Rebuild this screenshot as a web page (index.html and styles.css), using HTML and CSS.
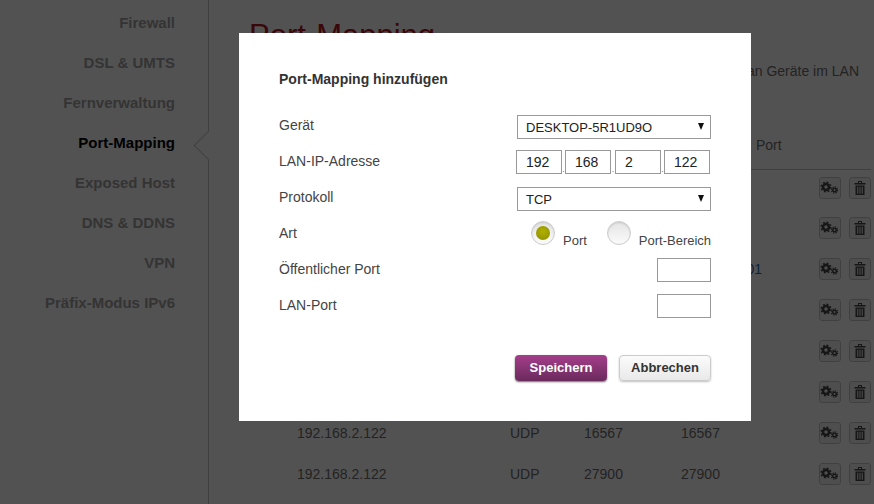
FILE: index.html
```html
<!DOCTYPE html>
<html lang="de">
<head>
<meta charset="utf-8">
<title>Port-Mapping</title>
<link rel="stylesheet" href="styles.css">
</head>
<body>
<svg class="defs" width="0" height="0" aria-hidden="true">
  <symbol id="gears" viewBox="0 0 20 20">
    <circle cx="6" cy="9" r="3" fill="none" stroke="currentColor" stroke-width="2.500"/>
    <circle cx="6" cy="9" r="4.800" fill="none" stroke="currentColor" stroke-width="1.500" stroke-dasharray="1.900 1.870"/>
    <circle cx="14.500" cy="12" r="1.800" fill="none" stroke="currentColor" stroke-width="1.400"/>
    <circle cx="14.500" cy="12" r="3.100" fill="none" stroke="currentColor" stroke-width="1.100" stroke-dasharray="1.300 1.135"/>
  </symbol>
  <symbol id="trash" viewBox="0 0 20 20">
    <path d="M4.500 5h11v1.500h-11zM8 5V3h4v2h-1V4H9v1z" fill="currentColor"/>
    <path d="M5.500 7.500h9V17h-9zM7.200 8.800v7h1.100v-7zM9.450 8.800v7h1.100v-7zM11.700 8.800v7h1.100v-7z" fill="currentColor" fill-rule="evenodd"/>
  </symbol>
</svg>

<div class="page">
  <nav class="sidebar">
    <a class="nav-item">Firewall</a>
    <a class="nav-item">DSL &amp; UMTS</a>
    <a class="nav-item">Fernverwaltung</a>
    <a class="nav-item active">Port-Mapping</a>
    <a class="nav-item">Exposed Host</a>
    <a class="nav-item">DNS &amp; DDNS</a>
    <a class="nav-item">VPN</a>
    <a class="nav-item">Präfix-Modus IPv6</a>
  </nav>
  <main class="content">
    <h1 class="page-title">Port-Mapping</h1>
    <p class="intro">an Geräte im LAN</p>
    <table class="rules">
      <thead>
        <tr><th class="c-ip"></th><th class="c-proto"></th><th class="c-pub"></th><th class="c-lan">Port</th><th class="c-act"></th></tr>
      </thead>
      <tbody>
        <tr><td></td><td></td><td></td><td></td><td class="c-act"><button class="icon-btn"><svg><use href="#gears"/></svg></button><button class="icon-btn"><svg><use href="#trash"/></svg></button></td></tr>
        <tr><td></td><td></td><td></td><td></td><td class="c-act"><button class="icon-btn"><svg><use href="#gears"/></svg></button><button class="icon-btn"><svg><use href="#trash"/></svg></button></td></tr>
        <tr><td></td><td></td><td></td><td class="link-cell">01</td><td class="c-act"><button class="icon-btn"><svg><use href="#gears"/></svg></button><button class="icon-btn"><svg><use href="#trash"/></svg></button></td></tr>
        <tr><td></td><td></td><td></td><td></td><td class="c-act"><button class="icon-btn"><svg><use href="#gears"/></svg></button><button class="icon-btn"><svg><use href="#trash"/></svg></button></td></tr>
        <tr><td></td><td></td><td></td><td></td><td class="c-act"><button class="icon-btn"><svg><use href="#gears"/></svg></button><button class="icon-btn"><svg><use href="#trash"/></svg></button></td></tr>
        <tr><td></td><td></td><td></td><td></td><td class="c-act"><button class="icon-btn"><svg><use href="#gears"/></svg></button><button class="icon-btn"><svg><use href="#trash"/></svg></button></td></tr>
        <tr><td class="c-ip">192.168.2.122</td><td>UDP</td><td>16567</td><td>16567</td><td class="c-act"><button class="icon-btn"><svg><use href="#gears"/></svg></button><button class="icon-btn"><svg><use href="#trash"/></svg></button></td></tr>
        <tr><td class="c-ip">192.168.2.122</td><td>UDP</td><td>27900</td><td>27900</td><td class="c-act"><button class="icon-btn"><svg><use href="#gears"/></svg></button><button class="icon-btn"><svg><use href="#trash"/></svg></button></td></tr>
      </tbody>
    </table>
  </main>
</div>

<div class="overlay"></div>

<section class="modal">
  <h2 class="modal-title">Port-Mapping hinzufügen</h2>
  <form class="form">
    <div class="row">
      <label class="label">Gerät</label>
      <div class="select">DESKTOP-5R1UD9O</div>
    </div>
    <div class="row row-ip">
      <label class="label">LAN-IP-Adresse</label>
      <div class="ip">
        <input class="field ip-part" value="192"><span class="dot">.</span>
        <input class="field ip-part" value="168"><span class="dot">.</span>
        <input class="field ip-part" value="2"><span class="dot">.</span>
        <input class="field ip-part" value="122">
      </div>
    </div>
    <div class="row">
      <label class="label">Protokoll</label>
      <div class="select">TCP</div>
    </div>
    <div class="row">
      <label class="label">Art</label>
      <div class="radios">
        <span class="radio checked"></span><span class="radio-text">Port</span>
        <span class="radio"></span><span class="radio-text">Port-Bereich</span>
      </div>
    </div>
    <div class="row">
      <label class="label">Öffentlicher Port</label>
      <input class="field port">
    </div>
    <div class="row">
      <label class="label">LAN-Port</label>
      <input class="field port">
    </div>
    <div class="actions">
      <button type="button" class="btn primary">Speichern</button>
      <button type="button" class="btn secondary">Abbrechen</button>
    </div>
  </form>
</section>
</body>
</html>
```
FILE: styles.css
```css
* { box-sizing: border-box; }
html, body { margin: 0; height: 100%; }
body {
  width: 874px;
  height: 504px;
  overflow: hidden;
  position: relative;
  background: #fff;
  color: #333;
  font-family: "Liberation Sans", Arial, sans-serif;
  font-size: 14px;
}
.defs { position: absolute; }

.page { display: flex; height: 504px; }

/* sidebar */
.sidebar {
  width: 209px;
  flex: none;
  padding: 3px 33px 0 0;
  border-right: 1px solid #c4c4c4;
  position: relative;
  text-align: right;
}
.nav-item {
  display: block;
  height: 40px;
  line-height: 40px;
  font-size: 15px;
  font-weight: 700;
  color: #a3a3a3;
}
.nav-item.active { color: #000; }
.sidebar::after {
  content: "";
  position: absolute;
  left: 198px;
  top: 135px;
  width: 20px;
  height: 20px;
  background: #fff;
  border-left: 1px solid #c4c4c4;
  border-bottom: 1px solid #c4c4c4;
  transform: rotate(45deg);
}

/* main */
.content { flex: 1; min-width: 0; padding: 18px 3px 0 40px; }
.page-title {
  margin: 0;
  font-size: 31px;
  line-height: 36px;
  font-weight: 400;
  color: #b5141e;
}
.intro {
  margin: 9px 12px 0 0;
  text-align: right;
  line-height: 16px;
  color: #6e6e6e;
}
.rules {
  margin-top: 45px;
  width: 622px;
  table-layout: fixed;
  border-collapse: collapse;
  color: #6e6e6e;
}
.rules th {
  height: 45px;
  padding: 0 0 3px;
  font-weight: 400;
  text-align: left;
  border-bottom: 1px solid #c4c4c4;
}
.rules td {
  height: 41px;
  padding: 10px 0 0;
  line-height: 16px;
  vertical-align: top;
}
.rules th.c-ip { width: 261px; }
.rules td.c-ip { padding-left: 48px; }
.c-proto { width: 74px; }
.c-pub { width: 97px; }
.rules th.c-lan { width: 138px; padding-left: 75px; }
.rules td.link-cell { text-align: right; padding-right: 57px; color: #1d6fb5; }
.rules th.c-act { width: 52px; }
.rules td.c-act { white-space: nowrap; padding-top: 7px; line-height: 0; }
.icon-btn {
  display: inline-block;
  vertical-align: top;
  width: 22px;
  height: 22px;
  padding: 0;
  margin-right: 8px;
  border: 1px solid #c8c8c8;
  border-radius: 3px;
  background: #f2f2f2;
  color: #444;
}
.icon-btn:last-child { margin-right: 0; }
.icon-btn svg { display: block; width: 20px; height: 20px; }

/* overlay + dialog */
.overlay { position: absolute; inset: 0; background: rgba(0, 0, 0, .68); }
.modal {
  position: absolute;
  left: 239px;
  top: 33px;
  width: 512px;
  height: 388px;
  padding: 38px 40px 0;
  background: #fff;
}
.modal-title {
  margin: 0;
  font-size: 14px;
  line-height: 16px;
  font-weight: 700;
  color: #333;
}
.form { margin-top: 28px; }
.row {
  display: flex;
  justify-content: space-between;
  align-items: flex-start;
  height: 36px;
}
.label { line-height: 20px; color: #444; }
.select {
  position: relative;
  width: 194px;
  height: 24px;
  padding: 1px 0 0 8px;
  border: 1px solid #999;
  font-size: 13px;
  line-height: 22px;
  color: #222;
  background: #fff;
}
.select::after {
  content: "";
  position: absolute;
  right: 6px;
  top: 7px;
  border-left: 3.500px solid transparent;
  border-right: 3.500px solid transparent;
  border-top: 7px solid #111;
}
.row-ip { padding-right: 1px; }
.ip { display: flex; align-items: flex-end; margin-top: -1px; margin-left: -1px; }
.field {
  height: 24px;
  padding: 0 0 0 9px;
  border: 1px solid #999;
  border-radius: 0;
  font: 14px "Liberation Sans", Arial, sans-serif;
  color: #222;
  background: #fff;
  outline: none;
}
.ip-part { width: 46px; }
.dot { width: 3px; font-size: 9px; line-height: 9px; color: #777; text-align: center; }
.dot:nth-of-type(2) { width: 4px; }
.port { width: 54px; margin-top: -1px; }
.radios {
  display: flex;
  align-items: flex-start;
  width: 180px;
  font-size: 13px;
  color: #444;
  white-space: nowrap;
}
.radio {
  flex: none;
  position: relative;
  width: 24px;
  height: 24px;
  margin-top: -2px;
  border: 1px solid #ccc;
  border-radius: 50%;
  background: linear-gradient(#e4e4e4, #fbfbfb);
  box-shadow: inset 0 1px 2px rgba(0, 0, 0, .12);
}
.radio.checked::after {
  content: "";
  position: absolute;
  left: 4px;
  top: 4px;
  width: 14px;
  height: 14px;
  border-radius: 50%;
  background: radial-gradient(circle at 50% 40%, #b0b000, #8d8d00);
}
.radio-text { margin: 10px 20px 0 8px; line-height: 15px; }
.radio-text:last-child { margin-right: 0; }
.actions {
  display: flex;
  justify-content: flex-end;
  gap: 12px;
  margin-top: 24px;
}
.btn {
  width: 92px;
  height: 26px;
  padding: 0 0 2px;
  border-radius: 4px;
  font: 700 13px "Liberation Sans", Arial, sans-serif;
}
.primary {
  border: 0;
  color: #fff;
  background: linear-gradient(#a43e8b, #6b2a5c);
  box-shadow: 0 1px 2px rgba(0, 0, 0, .6);
}
.secondary {
  border: 1px solid #ccc;
  color: #333;
  background: linear-gradient(#fbfbfb, #e9e9e9);
  box-shadow: 0 1px 2px rgba(0, 0, 0, .25);
}
```
